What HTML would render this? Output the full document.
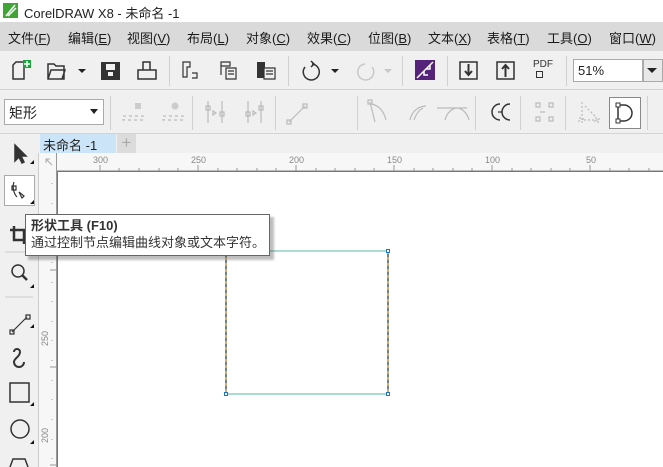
<!DOCTYPE html>
<html><head><meta charset="utf-8"><style>
*{margin:0;padding:0;box-sizing:border-box}
body{width:663px;height:467px;overflow:hidden;background:#f0f0f0;font-family:"Liberation Sans","Noto Sans CJK SC",sans-serif;position:relative;color:#222}
.a{position:absolute}
.menu span{position:absolute;top:6px;font-size:13px;color:#1a1a1a}
</style></head><body>
<div class="a" style="left:0;top:0;width:663px;height:22px;background:#fff"></div>
<svg class="a" style="left:3px;top:3px" width="15" height="15"><rect width="15" height="15" fill="#3fa535"/><path d="M3 13 L12 2 M5 13 L13 5" stroke="#fff" stroke-width="1.5"/></svg>
<div class="a" style="left:24px;top:3px;font-size:13px">CorelDRAW X8 - 未命名 -1</div>
<div class="a menu" style="left:0;top:22px;width:663px;height:29px;background:#dadada">
<span style="left:8px">文件(<u>F</u>)</span><span style="left:68px">编辑(<u>E</u>)</span><span style="left:127px">视图(<u>V</u>)</span><span style="left:187px">布局(<u>L</u>)</span><span style="left:246px">对象(<u>C</u>)</span><span style="left:307px">效果(<u>C</u>)</span><span style="left:368px">位图(<u>B</u>)</span><span style="left:428px">文本(<u>X</u>)</span><span style="left:487px">表格(<u>T</u>)</span><span style="left:547px">工具(<u>O</u>)</span><span style="left:609px">窗口(<u>W</u>)</span>
</div>
<div class="a" style="left:0;top:89px;width:663px;height:1px;background:#d4d4d4"></div>
<svg class="a" style="left:0;top:51px" width="663" height="38" fill="none" stroke="#333" stroke-width="1.5">
<path d="M13 28V14l3-3h8v17z"/><rect x="23" y="9" width="8" height="8" fill="#1aa33b" stroke="none"/><path d="M27 10v6M24 13h6" stroke="#fff"/>
<path d="M48 28V13h6l2 2h8v13z M48 28l3-9h14l-3 9" /><path d="M78 18l4 4 4-4z" fill="#222" stroke="none"/>
<rect x="101" y="11" width="19" height="18" fill="#333" stroke="none"/><rect x="106" y="13" width="9" height="6" fill="#f0f0f0" stroke="none"/><rect x="108" y="21" width="5" height="4" fill="#f0f0f0" stroke="none"/>
<path d="M138 28V19h18v9zM143 19v-8h7v8"/>
<path d="M183 26V11h7v5h-3v10zM192 22h5v5h-5" stroke-width="1.2"/>
<path d="M221 24V11h9v4h-9M226 17h10v11h-10zM228 20h6M228 23h6" stroke-width="1.2"/>
<rect x="257" y="11" width="8" height="16" fill="#333" stroke="none"/><path d="M264 17h11v11h-11zM266 20h7M266 23h7" stroke-width="1.2" fill="#f0f0f0"/>
<path d="M305 16a8 8 0 1 0 7-3" /><path d="M311 10l3 3-3 3"/><path d="M331 18l4 4 4-4z" fill="#222" stroke="none"/>
<path d="M372 16a8 8 0 1 1-7-3" stroke="#c8c8c8"/><path d="M384 18l4 4 4-4z" fill="#c8c8c8" stroke="none"/>
<rect x="415" y="9" width="20" height="20" fill="#55247a" stroke="none"/><path d="M417 27l16-16M424 20v4h4M426 18h4v-4" stroke="#fff"/>
<rect x="460" y="11" width="17" height="17" stroke-width="1.5"/><path d="M468.5 13v11M465 20l3.5 4 3.5-4" stroke-width="2"/>
<rect x="497" y="11" width="17" height="17"/><path d="M505.5 26v-11M502 18l3.5-4 3.5 4" stroke-width="2"/>
</svg>
<div class="a" style="left:533px;top:60px;font-size:10px;color:#333;line-height:10px">PDF</div>
<div class="a" style="left:536px;top:71px;width:7px;height:7px;border:1.5px solid #333"></div>
<div class="a" style="left:573px;top:59px;width:70px;height:23px;background:#fff;border:1px solid #aaa;font-size:13px;padding:3px 0 0 4px">51%</div>
<div class="a" style="left:643px;top:59px;width:20px;height:23px;background:#e8e8e8;border:1px solid #aaa"></div>
<svg class="a" style="left:646px;top:66px" width="12" height="8"><path d="M1 2l5 5 5-5z" fill="#222"/></svg>
<div class="a" style="left:169px;top:56px;width:1px;height:30px;background:#d0d0d0"></div>
<div class="a" style="left:288px;top:56px;width:1px;height:30px;background:#d0d0d0"></div>
<div class="a" style="left:402px;top:56px;width:1px;height:30px;background:#d0d0d0"></div>
<div class="a" style="left:447px;top:56px;width:1px;height:30px;background:#d0d0d0"></div>
<div class="a" style="left:566px;top:56px;width:1px;height:30px;background:#d0d0d0"></div>
<div class="a" style="left:4px;top:99px;width:100px;height:26px;background:#fff;border:1px solid #aaa;font-size:14px;padding:3px 0 0 4px">矩形</div>
<svg class="a" style="left:90px;top:109px" width="10" height="6"><path d="M0 0l4 5 4-5z" fill="#222"/></svg>
<svg class="a" style="left:0;top:90px" width="663" height="43" fill="none" stroke="#bbb" stroke-width="1.2">
<rect x="135" y="13" width="6" height="6" fill="#ccc" stroke="none"/><rect x="123" y="26" width="20" height="4" stroke-dasharray="3 3"/>
<circle cx="175" cy="16" r="3.5" fill="#ccc" stroke="none"/><rect x="163" y="26" width="20" height="4" stroke-dasharray="3 3"/>
<path d="M208 11v22M222 11v22M206 16h4v4h-4zM220 22h4v4h-4zM213 21l3 2-3 2z"/>
<path d="M248 11v22M261 11v22M246 22h4v4h-4zM259 16h4v4h-4zM253 21l3 2-3 2z"/>
<path d="M289 32l16-16M287 30h4v4h-4zM303 14h4v4h-4z"/>
<path d="M370 12l5 20M372 14c8 2 12 8 14 16M368 10h4v4h-4z"/><path d="M410 30c2-10 10-14 16-14M414 30c2-6 5-10 9-12"/><path d="M445 30c2-8 8-12 12-12s10 4 12 12M437 18h30"/>
<path d="M500 14a8 8 0 0 0 0 16M510 14a8 8 0 0 0 0 16" stroke="#333" stroke-width="1.5"/><path d="M498 22l4 0" stroke="#333"/>
<path d="M536 13h4v4h-4zM536 27h4v4h-4zM549 13h4v4h-4zM549 27h4v4h-4zM540 22h5"/>
<path d="M582 12v18h16M579 28h4v4h-4zM595 28h4v4h-4zM585 16l10 10" stroke-dasharray="2 2"/>
</svg>
<div class="a" style="left:609px;top:97px;width:32px;height:32px;background:#fff;border:1px solid #888"></div>
<svg class="a" style="left:609px;top:97px" width="32" height="32" fill="none" stroke="#333" stroke-width="1.5"><path d="M9 8v16M9 8h6a8 8 0 0 1 0 16h-6"/><rect x="7" y="6" width="4" height="4" fill="#fff" stroke-width="1"/><rect x="7" y="22" width="4" height="4" fill="#fff" stroke-width="1"/></svg>
<div class="a" style="left:110px;top:96px;width:1px;height:34px;background:#d0d0d0"></div>
<div class="a" style="left:192px;top:96px;width:1px;height:34px;background:#d0d0d0"></div>
<div class="a" style="left:275px;top:96px;width:1px;height:34px;background:#d0d0d0"></div>
<div class="a" style="left:357px;top:96px;width:1px;height:34px;background:#d0d0d0"></div>
<div class="a" style="left:475px;top:96px;width:1px;height:34px;background:#d0d0d0"></div>
<div class="a" style="left:520px;top:96px;width:1px;height:34px;background:#d0d0d0"></div>
<div class="a" style="left:565px;top:96px;width:1px;height:34px;background:#d0d0d0"></div>
<div class="a" style="left:647px;top:96px;width:1px;height:34px;background:#d0d0d0"></div>
<div class="a" style="left:0;top:133px;width:663px;height:1px;background:#d4d4d4"></div>
<div class="a" style="left:40px;top:134px;width:76px;height:19px;background:#cce4f7;font-size:13px;padding:1px 0 0 3px">未命名 -1</div>
<div class="a" style="left:117px;top:134px;width:19px;height:19px;background:#dcdcdc;color:#aaa;font-size:17px;text-align:center;line-height:18px">+</div>
<div class="a" style="left:38px;top:153px;width:625px;height:18px;background:#f7f7f7;border-bottom:1px solid #bbb"></div>
<div class="a" style="left:38px;top:153px;width:19px;height:314px;background:#f7f7f7;border-right:1px solid #999"></div>
<div class="a" style="left:38px;top:153px;width:1px;height:314px;background:#ccc"></div>
<svg class="a" style="left:38px;top:153px" width="625" height="18"><g stroke="#999">
<path d="M62 12v6M81 15v3M101 15v3M121 15v3M140 15v3M160 12v6M180 15v3M199 15v3M219 15v3M238 15v3M258 12v6M278 15v3M297 15v3M317 15v3M336 15v3M356 12v6M376 15v3M395 15v3M415 15v3M434 15v3M454 12v6M474 15v3M493 15v3M513 15v3M532 15v3M552 12v6M572 15v3M591 15v3M611 15v3"/></g>
<g font-size="9" fill="#888" font-family="Liberation Sans"><text x="55" y="10">300</text><text x="153" y="10">250</text><text x="251" y="10">200</text><text x="349" y="10">150</text><text x="447" y="10">100</text><text x="548" y="10">50</text></g>
<path d="M8 6l6 6M8 6v4M8 6h4" stroke="#aaa" fill="none"/></svg>
<svg class="a" style="left:38px;top:171px" width="19" height="296"><g stroke="#999"><path d="M14 12v1M14 32v1M14 52v1M14 71v1M14 91v1M14 111v1M14 130v1M14 150v1M14 169v1M14 189v1M14 209v1M14 228v1M14 248v1M14 268v1M14 287v1M12 196h7"/><path d="M12 99h7M12 294h7"/></g>
<g font-size="9" fill="#888" font-family="Liberation Sans"><text transform="translate(10,175) rotate(-90)">250</text><text transform="translate(10,272) rotate(-90)">200</text></g></svg>
<div class="a" style="left:58px;top:171px;width:605px;height:296px;background:#fff"></div>
<div class="a" style="left:57px;top:171px;width:606px;height:1px;background:#777"></div>
<div class="a" style="left:57px;top:171px;width:1px;height:296px;background:#777"></div>
<svg class="a" style="left:220px;top:245px" width="175" height="155"><rect x="6" y="6" width="162" height="143" fill="none" stroke="#8fd0c0" stroke-width="1.5"/>
<path d="M6 6v143M168 6v143" stroke="#e87a10" stroke-width="1.2" stroke-dasharray="3 3"/><path d="M6 9v143M168 9v143" stroke="#222" stroke-width="1" stroke-dasharray="3 3"/>
<g fill="#fff" stroke="#1a75d0"><rect x="4.5" y="4.5" width="3" height="3"/><rect x="166.5" y="4.5" width="3" height="3"/><rect x="4.5" y="147.5" width="3" height="3"/><rect x="166.5" y="147.5" width="3" height="3"/></g></svg>
<div class="a" style="left:4px;top:175px;width:31px;height:31px;background:#fff;border:1px solid #aaa"></div>
<svg class="a" style="left:0;top:134px" width="38" height="333" fill="none" stroke="#333" stroke-width="1.5">
<path d="M15 11v16l4-4 3 6 2-1-3-6h5z" fill="#333"/><path d="M30 30h4v-4z" fill="#111" stroke="none"/>
<path d="M14 48c-2 5 0 12 3 15M12 52h4v4h-4zM19 58l5 4-2 2z" stroke-width="1.2"/><path d="M30 70h4v-4z" fill="#111" stroke="none"/>
<path d="M5 118h28" stroke="#ccc" stroke-width="1"/>
<path d="M14 92v14h14M10 96h14v14" stroke-width="2.5"/>
<circle cx="18" cy="137" r="6"/><path d="M22 141l5 5" stroke-width="2.5"/><path d="M30 154h4v-4z" fill="#111" stroke="none"/>
<path d="M5 163h28" stroke="#ccc" stroke-width="1"/>
<path d="M12 198l15-15M10 196h4v4h-4zM26 181h4v4h-4z" stroke-width="1.2"/><path d="M30 194h4v-4z" fill="#111" stroke="none"/>
<path d="M14 218a3 3 0 0 1 6 0c0 5-6 6-6 10a5 5 0 0 0 10 0" stroke-width="2"/>
<rect x="10" y="249" width="19" height="19"/><path d="M30 272h4v-4z" fill="#111" stroke="none"/>
<circle cx="20" cy="295" r="9"/><path d="M30 310h4v-4z" fill="#111" stroke="none"/>
<path d="M10 333l3-8h12l3 8"/>
</svg>
<div class="a" style="left:28px;top:217px;width:246px;height:43px;background:#444;opacity:.35;filter:blur(1px)"></div>
<div class="a" style="left:25px;top:214px;width:245px;height:42px;background:#fff;border:1px solid #666;font-size:13px;padding:2px 0 0 5px;line-height:17px;color:#333;white-space:nowrap">
<b>形状工具 (F10)</b><br>通过控制节点编辑曲线对象或文本字符。</div>
</body></html>
